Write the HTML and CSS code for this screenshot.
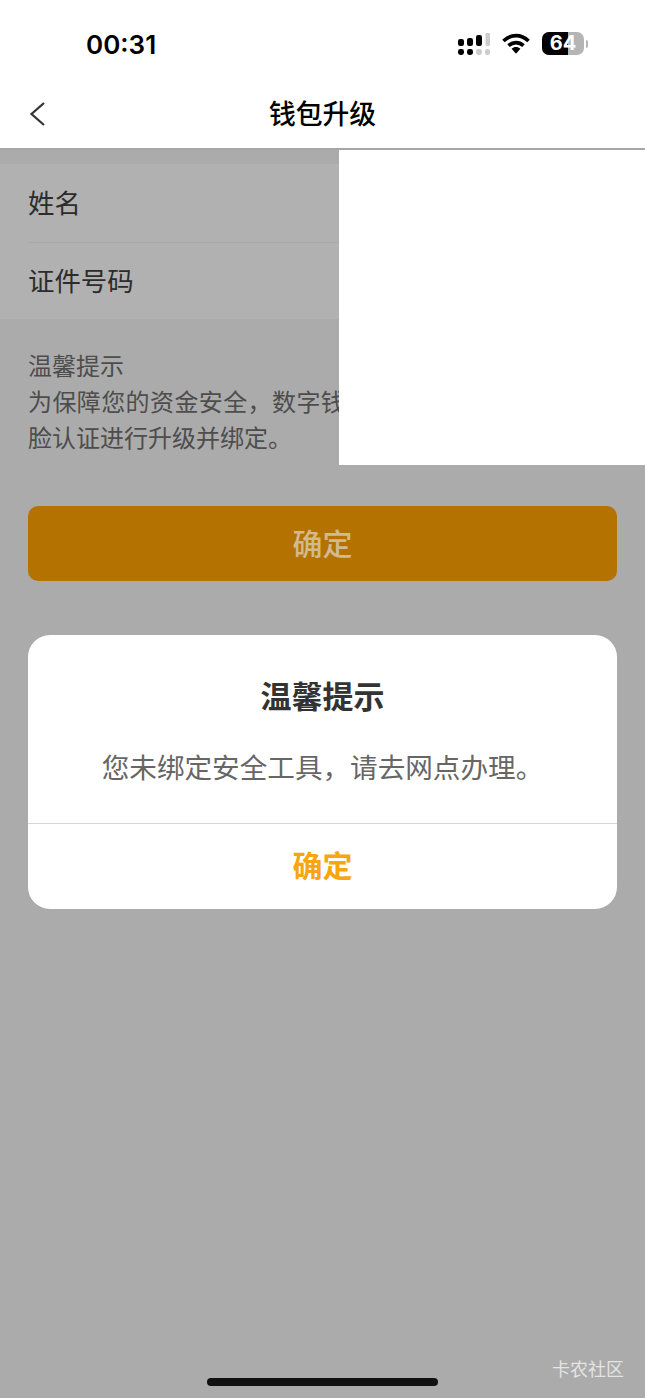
FILE: index.html
```html
<!DOCTYPE html>
<html lang="zh-CN">
<head>
  <meta charset="UTF-8" />
  <meta name="viewport" content="width=device-width, initial-scale=1.0"/>
  <title>钱包升级</title>
  <link rel="stylesheet" href="styles.css">
</head>
<body>
  <div class="top">
    <div class="status">
      <span class="time">00:31</span>
      <div class="status-icons">
        <svg class="signal" width="32" height="22" viewBox="0 0 32 22">
          <rect x="0" y="6" width="6" height="7" rx="2.2" fill="#000"/>
          <rect x="9" y="5" width="6" height="8" rx="2.2" fill="#000"/>
          <rect x="18" y="2" width="6" height="11" rx="2.2" fill="#000"/>
          <rect x="27.5" y="0" width="4.5" height="13" rx="1.2" fill="#ccc"/>
          <rect x="0" y="16" width="6" height="6" rx="2.4" fill="#000"/>
          <rect x="9" y="16" width="6" height="6" rx="2.4" fill="#000"/>
          <rect x="18" y="16" width="6" height="6" rx="2.4" fill="#ccc"/>
          <rect x="27" y="16" width="5" height="6" rx="2.2" fill="#ccc"/>
        </svg>
        <svg class="wifi" width="28" height="21" viewBox="0 0 28 21">
          <path d="M1.5 8 C9 0.8 19 0.8 26.5 8" fill="none" stroke="#000" stroke-width="3.8"/>
          <path d="M6.5 12.6 C11 8.6 17 8.6 21.5 12.6" fill="none" stroke="#000" stroke-width="3.8"/>
          <path d="M9.6 15.8 C12.2 13.4 15.8 13.4 18.4 15.8 L14 20.8 Z" fill="#000"/>
        </svg>
        <div class="battery">
          <div class="battery-body"><span class="battery-level"></span><span class="battery-num">64</span></div>
          <span class="battery-cap"></span>
        </div>
      </div>
    </div>
    <div class="navbar">
      <svg class="back" width="16" height="26" viewBox="0 0 16 26">
        <path d="M15 2 L2.5 13 L15 24" fill="none" stroke="#333" stroke-width="2.2"/>
      </svg>
      <h1>钱包升级</h1>
    </div>
  </div>

  <div class="content">
    <div class="form">
      <div class="row">姓名</div>
      <div class="row">证件号码</div>
    </div>
    <div class="tips">
      <p>温馨提示</p>
      <p class="tips-wide">为保障您的资金安全，数字钱包需通过人</p>
      <p>脸认证进行升级并绑定。</p>
    </div>
    <button class="submit">确定</button>

    <div class="dialog">
      <h2>温馨提示</h2>
      <p>您未绑定安全工具，请去网点办理。</p>
      <div class="dialog-btn">确定</div>
    </div>
  </div>

  <div class="cover"></div>
  <div class="watermark">卡农社区</div>
  <div class="home-bar"></div>
</body>
</html>
```

FILE: styles.css
```css
* {
  box-sizing: border-box;
}
html, body {
  margin: 0;
  height: 100%;
}
body {
  width: 645px;
  height: 1398px;
  position: relative;
  overflow: hidden;
  display: flex;
  flex-direction: column;
  background: #ababab;
  font-family: "Noto Sans CJK SC", "Liberation Sans", sans-serif;
}
.top {
  background: #fff;
  height: 150px;
  border-bottom: 2px solid #a6a6a6;
}
.status {
  height: 84px;
  padding: 0 57px 0 86px;
  display: flex;
  justify-content: space-between;
  align-items: center;
}
.time {
  font-family: Inter, "Liberation Sans", sans-serif;
  font-size: 26px;
  font-weight: 600;
  color: #000;
  margin-top: 4px;
}
.status-icons {
  display: flex;
  align-items: center;
  margin-top: 3px;
}
.signal {
  margin-right: 12px;
}
.wifi {
  margin-right: 12px;
}
.battery {
  display: flex;
  align-items: center;
}
.battery-body {
  width: 42px;
  height: 23px;
  border-radius: 7px;
  background: #b5b5b5;
  position: relative;
  overflow: hidden;
}
.battery-level {
  position: absolute;
  left: 0;
  top: 0;
  bottom: 0;
  width: 26px;
  background: #000;
}
.battery-num {
  position: absolute;
  left: 0;
  right: 0;
  top: 0;
  text-align: center;
  font-family: Inter, "Liberation Sans", sans-serif;
  font-size: 20px;
  font-weight: 700;
  line-height: 23px;
  color: #fff;
}
.battery-cap {
  width: 2px;
  height: 8px;
  margin-left: 2px;
  border-radius: 0 2px 2px 0;
  background: #b5b5b5;
}
.navbar {
  height: 64px;
  padding-bottom: 8px;
  position: relative;
  display: flex;
  align-items: center;
  justify-content: center;
}
.back {
  position: absolute;
  left: 29px;
  top: 17px;
}
.navbar h1 {
  margin: 0;
  font-size: 26.8px;
  font-weight: 500;
  color: #000;
}
.content {
  flex: 1;
  padding-top: 14px;
}
.form {
  background: #b1b1b1;
  height: 155px;
  padding-left: 28px;
}
.row {
  height: 77.5px;
  padding-bottom: 2px;
  display: flex;
  align-items: center;
  font-size: 26.4px;
  color: #2c2c2c;
}
.row + .row {
  border-top: 1px solid #a9a9a9;
}
.tips {
  padding: 28px 28px 0;
  font-size: 24px;
  line-height: 36px;
  color: #4d4d4d;
  white-space: nowrap;
}
.tips p {
  margin: 0;
}
.tips .tips-wide {
  letter-spacing: 0.4px;
}
.submit {
  display: block;
  width: 589px;
  height: 75px;
  margin: 51px 0 0 28px;
  padding: 0 0 3px;
  border: none;
  border-radius: 10px;
  background: #b47300;
  color: #d2b98e;
  font-family: inherit;
  font-size: 30px;
  font-weight: 500;
}
.dialog {
  width: 589px;
  height: 274px;
  margin: 54px 0 0 28px;
  background: #fff;
  border-radius: 22px;
  display: flex;
  flex-direction: column;
  align-items: center;
}
.dialog h2 {
  margin: 38px 0 0;
  font-size: 31px;
  line-height: 44px;
  font-weight: 700;
  color: #333;
}
.dialog p {
  margin: 29px 0 0;
  height: 77px;
  font-size: 27.6px;
  line-height: 40px;
  color: #666;
}
.dialog-btn {
  width: 100%;
  flex: 1;
  padding-bottom: 6px;
  border-top: 1px solid #d8d8d8;
  display: flex;
  align-items: center;
  justify-content: center;
  font-size: 30px;
  font-weight: 700;
  color: #f9a511;
}
.cover {
  position: absolute;
  left: 339px;
  top: 150px;
  width: 306px;
  height: 315px;
  background: #fff;
}
.watermark {
  position: absolute;
  right: 21px;
  top: 1356px;
  font-size: 18px;
  line-height: 24px;
  color: #e4e4e4;
}
.home-bar {
  position: absolute;
  left: 207px;
  top: 1378px;
  width: 231px;
  height: 8px;
  border-radius: 4px;
  background: #111;
}
```
